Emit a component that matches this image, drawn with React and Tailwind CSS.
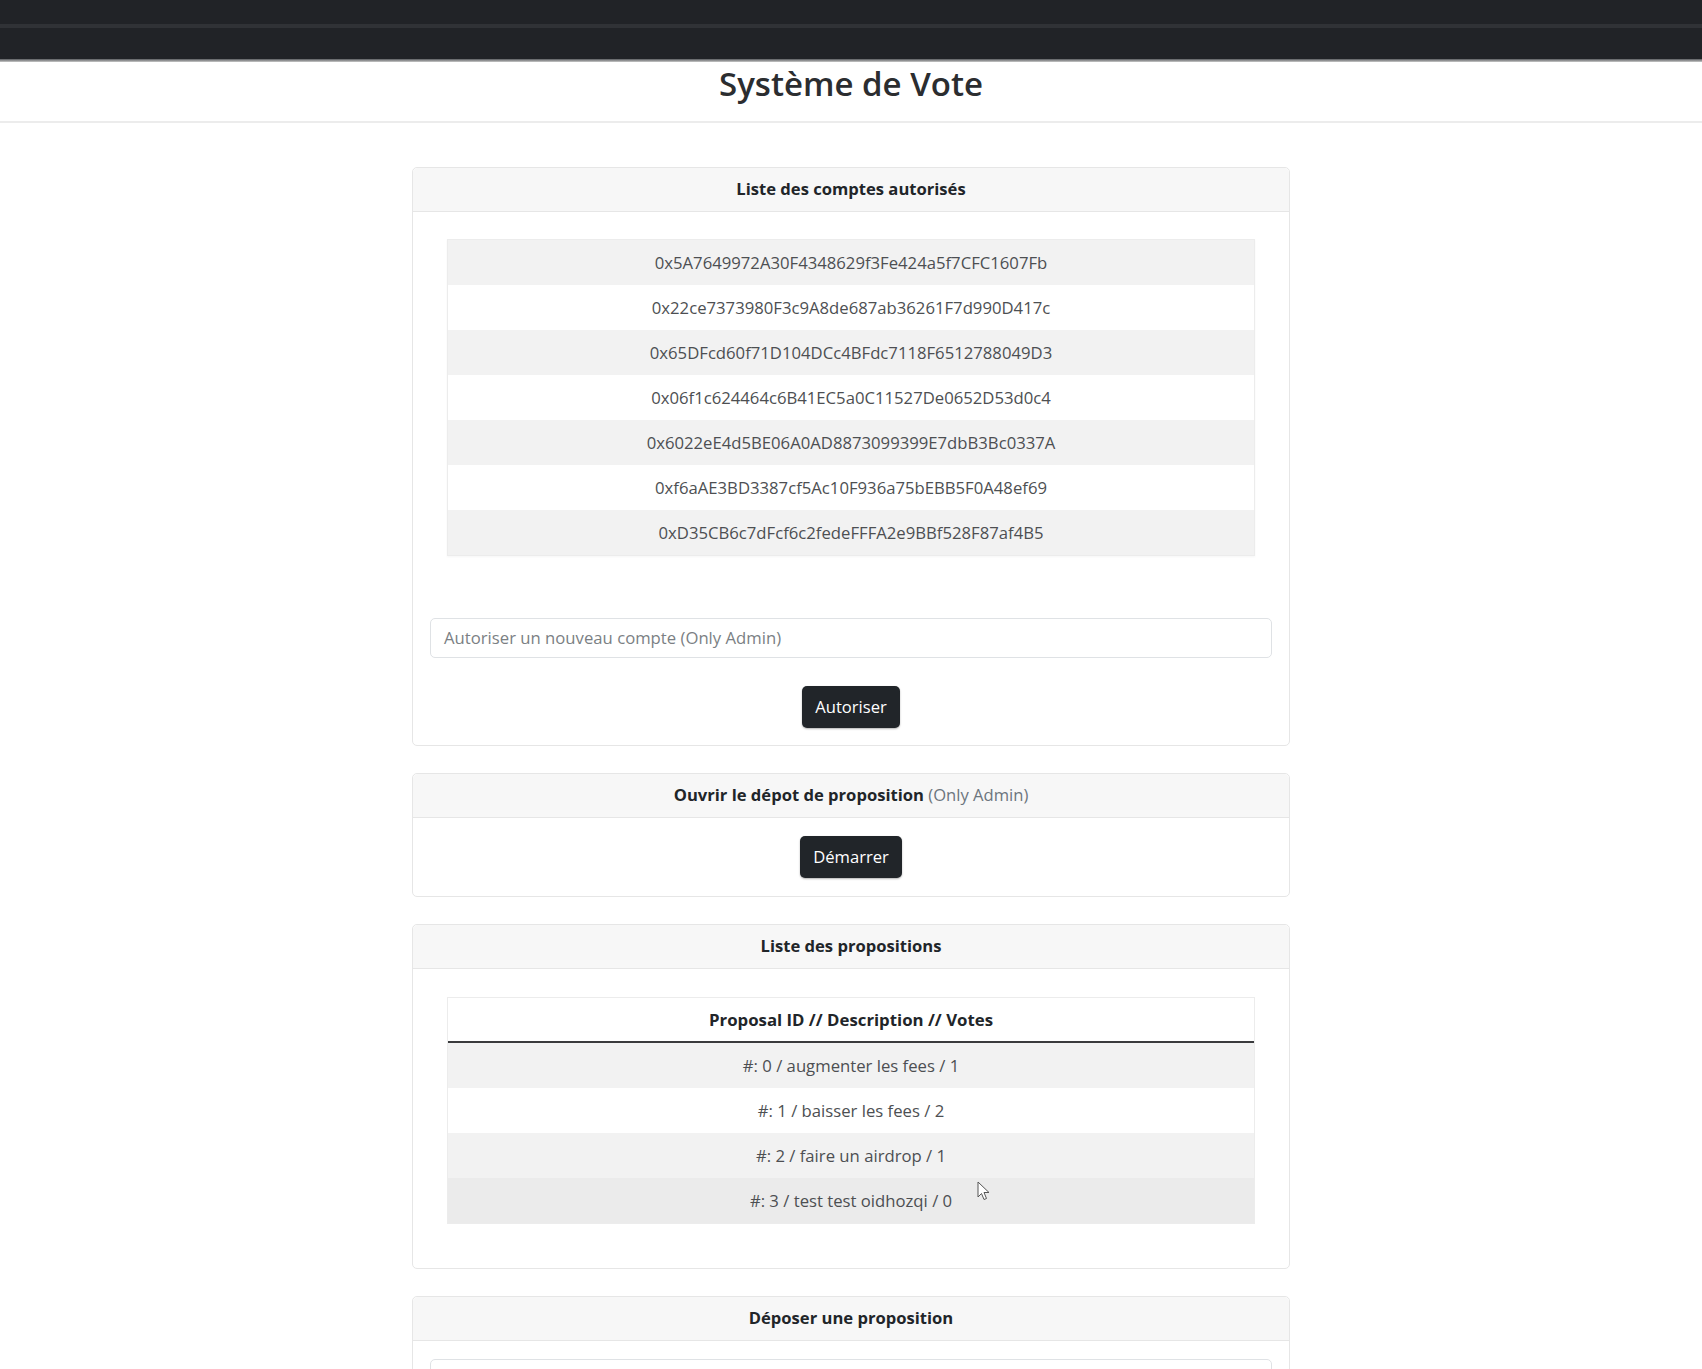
import React from "react";

const accounts = [
  "0x5A7649972A30F4348629f3Fe424a5f7CFC1607Fb",
  "0x22ce7373980F3c9A8de687ab36261F7d990D417c",
  "0x65DFcd60f71D104DCc4BFdc7118F6512788049D3",
  "0x06f1c624464c6B41EC5a0C11527De0652D53d0c4",
  "0x6022eE4d5BE06A0AD8873099399E7dbB3Bc0337A",
  "0xf6aAE3BD3387cf5Ac10F936a75bEBB5F0A48ef69",
  "0xD35CB6c7dFcf6c2fedeFFFA2e9BBf528F87af4B5",
];

const proposals = [
  "#: 0 / augmenter les fees / 1",
  "#: 1 / baisser les fees / 2",
  "#: 2 / faire un airdrop / 1",
  "#: 3 / test test oidhozqi / 0",
];

function Card({ title, children }) {
  return (
    <div className="w-[878px] mx-auto border border-[#e6e6e6] rounded-[5px] bg-white">
      <div className="h-[44px] flex items-center justify-center bg-[#f7f7f7] border-b border-[#e6e6e6] rounded-t-[5px] text-[16.6px] text-[#212529]">
        {title}
      </div>
      {children}
    </div>
  );
}

function DarkButton({ children }) {
  return (
    <button className="h-[42px] px-[13px] rounded-[5px] bg-[#212529] text-white text-[16.6px] leading-[24px] shadow-[0_1px_2px_rgba(0,0,0,0.3)]">
      {children}
    </button>
  );
}

export default function App() {
  return (
    <div className="relative min-h-[1369px] bg-white font-['Open_Sans','Noto_Sans',sans-serif] text-[#212529]">
      {/* top dark bar */}
      <div className="h-[24px] bg-[#212327]" />
      <div className="h-[4px] bg-[#303236]" />
      <div className="h-[31px] bg-[#212327]" />
      <div className="h-[3px] bg-gradient-to-b from-[#5a5c5f] to-[#c9c9c9]" />

      {/* title */}
      <div className="h-[61px] flex justify-center border-b-2 border-[#ececec]">
        <h1 className="text-[33px] leading-[44px] font-semibold text-[#2b2d30]">
          Système de Vote
        </h1>
      </div>

      <div className="pt-[44px] pb-[40px] flex flex-col gap-[27px]">
        {/* Card 1 */}
        <Card title={<span className="font-bold">Liste des comptes autorisés</span>}>
          <div className="px-[17px] pt-[27px] pb-[17px]">
            <div className="mx-[17px] border border-[#ececec] shadow-[0_1px_2px_rgba(0,0,0,0.04)]">
              {accounts.map((a, i) => (
                <div
                  key={a}
                  className={`h-[45px] flex items-center justify-center text-[16.7px] text-[#4d4f52] ${
                    i % 2 === 0 ? "bg-[#f2f2f2]" : "bg-white"
                  }`}
                >
                  {a}
                </div>
              ))}
            </div>
            <div className="mt-[62px] h-[40px] border border-[#dfe2e5] rounded-[5px] flex items-center px-[13px] text-[16.7px] text-[#7b7f84]">
              Autoriser un nouveau compte (Only Admin)
            </div>
            <div className="mt-[28px] flex justify-center">
              <DarkButton>Autoriser</DarkButton>
            </div>
          </div>
        </Card>

        {/* Card 2 */}
        <Card
          title={
            <span>
              <span className="font-bold">Ouvrir le dépot de proposition</span>{" "}
              <span className="text-[#6c757d]">(Only Admin)</span>
            </span>
          }
        >
          <div className="pt-[18px] pb-[18px] flex justify-center">
            <DarkButton>Démarrer</DarkButton>
          </div>
        </Card>

        {/* Card 3 */}
        <Card title={<span className="font-bold">Liste des propositions</span>}>
          <div className="px-[34px] pt-[28px] pb-[44px]">
            <div className="border border-[#ececec]">
              <div className="h-[45px] flex items-center justify-center font-bold text-[16.8px] text-[#212529] border-b-2 border-[#3a3b3d] bg-white">
                Proposal ID // Description // Votes
              </div>
              {proposals.map((p, i) => (
                <div
                  key={p}
                  className={`h-[45px] flex items-center justify-center text-[16.7px] text-[#4d4f52] ${
                    i === 3 ? "bg-[#ebebeb]" : i % 2 === 0 ? "bg-[#f2f2f2]" : "bg-white"
                  }`}
                >
                  {p}
                </div>
              ))}
            </div>
          </div>
        </Card>

        {/* Card 4 */}
        <Card title={<span className="font-bold">Déposer une proposition</span>}>
          <div className="px-[17px] pt-[18px] pb-[17px]">
            <div className="h-[40px] border border-[#dfe2e5] rounded-[5px] flex items-center px-[13px] text-[16.7px] text-[#7b7f84]">
              Description de la proposition
            </div>
            <div className="mt-[28px] flex justify-center">
              <DarkButton>Déposer</DarkButton>
            </div>
          </div>
        </Card>
      </div>

      {/* mouse cursor */}
      <svg
        className="absolute left-[977px] top-[1181px]"
        width="14"
        height="21"
        viewBox="0 0 14 21"
      >
        <path
          d="M1 1 L1 16 L4.5 12.5 L7 18.5 L9.5 17.5 L7 11.5 L12 11.5 Z"
          fill="#ffffff"
          stroke="#555"
          strokeWidth="1"
          strokeLinejoin="round"
        />
      </svg>
    </div>
  );
}
